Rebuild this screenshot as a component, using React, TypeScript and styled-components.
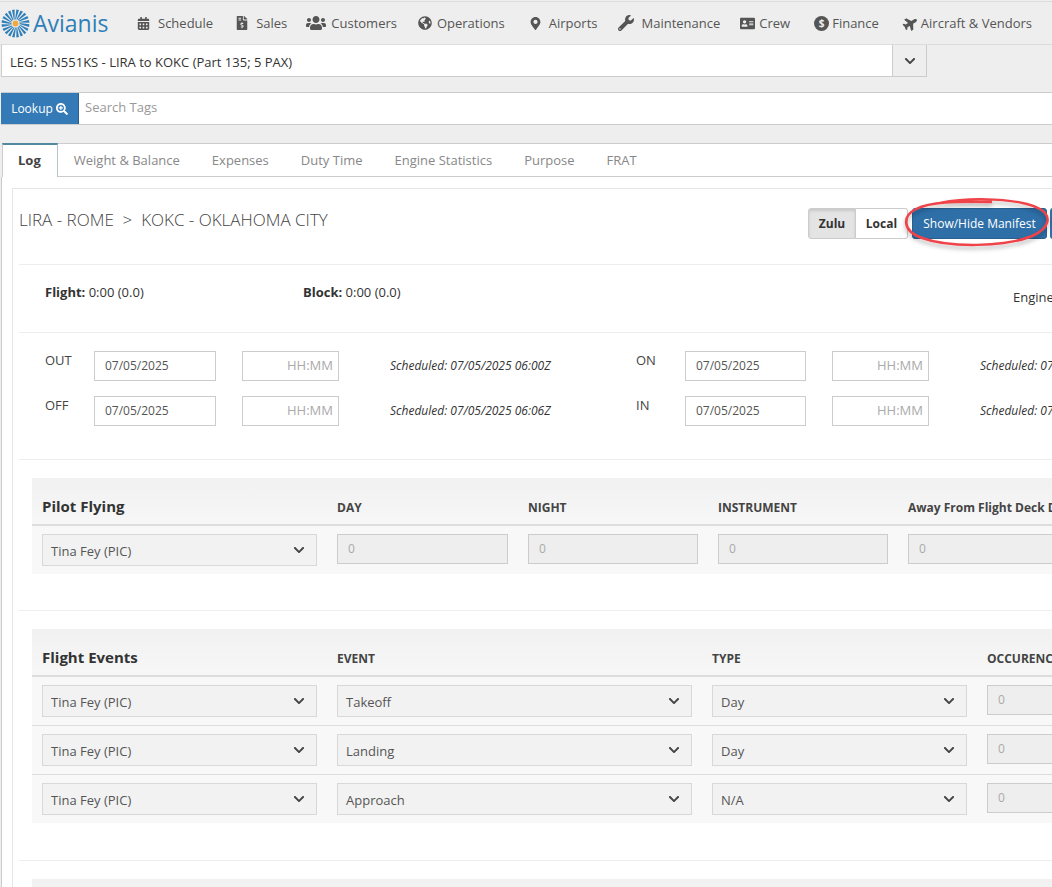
import React from "react";
import styled, { createGlobalStyle } from "styled-components";
import {
  FaAddressCard,
  FaCalendarAlt,
  FaChevronDown,
  FaFileInvoiceDollar,
  FaGlobeAmericas,
  FaMapMarkerAlt,
  FaPlane,
  FaSearchPlus,
  FaUsers,
  FaWrench,
} from "react-icons/fa";

const Global = createGlobalStyle`
  * { box-sizing: border-box; }
  html, body { margin: 0; padding: 0; height: 887px; overflow: hidden; background: #eeeeee; }
  body { font-family: "Open Sans", "Liberation Sans", sans-serif; font-size: 13px; color: #333; }
`;

const Page = styled.div`
  position: relative;
  width: 1052px;
  height: 887px;
  overflow: hidden;
  padding-top: 1px;
`;

const NavBar = styled.nav`
  display: flex;
  align-items: center;
  height: 44px;
  border-top: 1px solid #dcdcdc;
  border-bottom: 1px solid #dcdcdc;
  padding-left: 1px;
  white-space: nowrap;
`;

const Brand = styled.div`
  display: flex;
  flex: none;
  align-items: center;
  gap: 3px;
  width: 136px;
  color: #2f7fb8;
  font-size: 23px;
  line-height: 1;
`;

const NavItem = styled.a<{ $gap: number; $after: number }>`
  display: flex;
  flex: none;
  align-items: center;
  gap: ${(p) => p.$gap}px;
  margin-right: ${(p) => p.$after}px;
  color: #555;
  font-size: 13px;
  svg { color: #555; flex: none; }
`;

const TiltedPlane = styled(FaPlane)`
  transform: rotate(-32deg);
`;

const DollarBadge = styled.span`
  display: flex;
  align-items: center;
  justify-content: center;
  width: 15px;
  height: 15px;
  border-radius: 50%;
  background: #555;
  color: #eee;
  font-size: 10px;
  font-weight: 700;
`;

const LegRow = styled.div`
  display: flex;
  width: 926px;
  height: 32px;
  margin: 0 0 0 1px;
`;

const LegSelect = styled.div`
  flex: 1;
  display: flex;
  align-items: center;
  padding: 2px 0 0 8px;
  background: #fff;
  border: 1px solid #ccc;
  border-top: none;
  color: #333;
  font-size: 13px;
`;

const LegToggle = styled.div`
  display: flex;
  align-items: center;
  justify-content: center;
  width: 34px;
  color: #444;
  border: 1px solid #ccc;
  border-left: none;
  border-top: none;
`;

const LookupRow = styled.div`
  display: flex;
  height: 33px;
  margin: 15px 0 0 1px;
  border-top: 1px solid #ccc;
  border-bottom: 1px solid #ccc;
  background: #fff;
`;

const LookupButton = styled.button`
  display: flex;
  align-items: center;
  justify-content: center;
  gap: 3px;
  width: 78px;
  padding: 0;
  border: none;
  border-right: 1px solid #28608f;
  background: #337ab7;
  color: #fff;
  font: 400 12px "Open Sans", sans-serif;
`;

const SearchText = styled.div`
  display: flex;
  align-items: center;
  padding: 0 0 3px 6px;
  color: #999;
  font-size: 13px;
`;

const Tabs = styled.div`
  display: flex;
  height: 34px;
  margin: 18px 0 0 2px;
  background: #fff;
  border-top: 1px solid #ccc;
  border-bottom: 1px solid #ccc;
`;

const Tab = styled.div<{ $active?: boolean }>`
  display: flex;
  align-items: center;
  padding: 0 16px;
  color: ${(p) => (p.$active ? "#444" : "#888")};
  font-size: 13px;
  font-weight: ${(p) => (p.$active ? 700 : 400)};
  ${(p) =>
    p.$active &&
    `
    margin-top: -1px;
    height: 34px;
    padding: 0 16px 2px 15px;
    border-top: 2px solid #4f8aa0;
    border-left: 1px solid #ccc;
    border-right: 1px solid #b9c4c9;
    background: #fff;
  `}
`;

const TabBody = styled.div`
  height: 720px;
  margin-left: 1px;
  padding: 11px 0 0 10px;
  background: #fff;
  border-left: 1px solid #ccc;
`;

const Panel = styled.div`
  width: 1100px;
  height: 720px;
  padding: 0 6px;
  border: 1px solid #e6e6e6;
  border-right: none;
`;

const Header = styled.div`
  display: flex;
  justify-content: space-between;
  height: 76px;
  width: 1051px;
  padding-top: 19px;
  border-bottom: 1px solid #eee;
`;

const Route = styled.h1`
  margin: 1px 0 0;
  color: #444;
  font-size: 17px;
  font-weight: 300;
  line-height: 22px;
  white-space: pre;
`;

const HeaderActions = styled.div`
  display: flex;
  flex: none;
  height: 31px;
`;

const Toggle = styled.button<{ $on?: boolean; $side: "left" | "right" }>`
  flex: none;
  width: ${(p) => (p.$on ? "48px" : "52px")};
  padding: 0;
  background: ${(p) => (p.$on ? "#e4e4e4" : "#fff")};
  border: 1px solid #ccc;
  border-radius: ${(p) => (p.$side === "left" ? "3px 0 0 3px" : "0 3px 3px 0")};
  ${(p) => p.$side === "right" && "border-left: none;"}
  ${(p) => p.$on && "box-shadow: inset 0 2px 3px rgba(0,0,0,.12);"}
  color: #333;
  font: 700 12px "Open Sans", sans-serif;
`;

const ActionButton = styled.button`
  flex: none;
  width: 135px;
  margin-left: 4px;
  padding: 0;
  background: #2e6fa8;
  border: 1px solid #28608f;
  border-radius: 3px;
  color: #fff;
  font: 400 12px "Open Sans", sans-serif;
`;

const ExtraButton = styled.div`
  flex: none;
  width: 20px;
  margin-left: 3px;
  background: #2e6fa8;
  border-radius: 3px 0 0 3px;
`;

const Totals = styled.div`
  display: flex;
  height: 68px;
  width: 1051px;
  padding: 18px 0 0 26px;
  border-bottom: 1px solid #eee;
  font-size: 13px;
  line-height: 18px;
  color: #333;
  b { font-weight: 700; }
`;

const TotalCell = styled.div<{ $width: number }>`
  width: ${(p) => p.$width}px;
  flex: none;
  white-space: nowrap;
`;

const EngineCell = styled.div`
  padding-top: 5px;
  font-size: 13px;
`;

const Times = styled.div`
  display: flex;
  flex-direction: column;
  gap: 15px;
  height: 127px;
  width: 1051px;
  padding: 18px 0 0 26px;
  border-bottom: 1px solid #eee;
`;

const TimeRow = styled.div`
  display: flex;
  align-items: flex-start;
  height: 30px;
`;

const TimeLabel = styled.div`
  width: 49px;
  flex: none;
  color: #444;
  font-size: 13px;
  line-height: 18px;
`;

const TextBox = styled.div<{ $width: number; $right?: boolean }>`
  display: flex;
  align-items: center;
  justify-content: ${(p) => (p.$right ? "flex-end" : "flex-start")};
  flex: none;
  width: ${(p) => p.$width}px;
  height: 30px;
  margin-left: ${(p) => (p.$right ? "26px" : "0")};
  padding: 0 ${(p) => (p.$right ? "5px 2px" : "10px 1px")};
  border: 1px solid #ccc;
  color: ${(p) => (p.$right ? "#aaa" : "#555")};
  font-size: ${(p) => (p.$right ? "13px" : "12px")};
`;

const Scheduled = styled.div<{ $width: number }>`
  flex: none;
  width: ${(p) => p.$width}px;
  margin-left: 51px;
  padding-top: 7px;
  color: #333;
  font-size: 12px;
  font-style: italic;
  line-height: 16px;
  white-space: nowrap;
`;

const Section = styled.section`
  width: 1060px;
  margin: 18px 0 0 13px;
  background: #f8f8f8;
`;

const SectionHead = styled.div`
  display: grid;
  grid-template-columns: var(--cols);
  column-gap: 20px;
  align-items: end;
  height: 48px;
  padding: 0 0 7px 10px;
  background: linear-gradient(#f1f1f1, #f7f7f7);
  border-bottom: 2px solid #ddd;
`;

const SectionTitle = styled.div`
  color: #333;
  font-size: 15px;
  font-weight: 700;
  line-height: 22px;
`;

const ColumnTitle = styled.div`
  color: #444;
  font-size: 12px;
  font-weight: 700;
  line-height: 18px;
  white-space: nowrap;
`;

const SectionRow = styled.div`
  display: grid;
  grid-template-columns: var(--cols);
  column-gap: 20px;
  height: 49px;
  padding: 8px 0 0 10px;
  border-bottom: 1px solid #ddd;
  &:last-child { border-bottom: none; height: 48px; }
`;

const Select = styled.div`
  display: flex;
  align-items: center;
  justify-content: space-between;
  height: 32px;
  padding: 2px 11px 0 8px;
  background: #f2f2f2;
  border: 1px solid #d8d8d8;
  color: #555;
  font-size: 13px;
  svg { color: #444; margin-top: -2px; }
`;

const ReadOnly = styled.div`
  display: flex;
  align-items: center;
  height: 30px;
  padding: 0 0 2px 10px;
  background: #eee;
  border: 1px solid #ccc;
  color: #aaa;
  font-size: 12px;
`;

const Rule = styled.div<{ $gap: number }>`
  width: 1051px;
  height: 1px;
  margin-top: ${(p) => p.$gap}px;
  background: #eee;
`;

const Marker = styled.svg`
  position: absolute;
  left: 900px;
  top: 192px;
  pointer-events: none;
`;

const navLinks = [
  { label: "Schedule", gap: 8, after: 22, icon: <FaCalendarAlt size={13} /> },
  { label: "Sales", gap: 7, after: 19, icon: <FaFileInvoiceDollar size={14} /> },
  { label: "Customers", gap: 5, after: 21, icon: <FaUsers size={20} /> },
  { label: "Operations", gap: 5, after: 24, icon: <FaGlobeAmericas size={14} /> },
  { label: "Airports", gap: 7, after: 21, icon: <FaMapMarkerAlt size={13} /> },
  { label: "Maintenance", gap: 7, after: 20, icon: <FaWrench size={16} /> },
  { label: "Crew", gap: 4, after: 24, icon: <FaAddressCard size={15} /> },
  { label: "Finance", gap: 3, after: 24, icon: <DollarBadge>$</DollarBadge> },
  { label: "Aircraft & Vendors", gap: 3, after: 0, icon: <TiltedPlane size={15} /> },
];

const tabs = ["Weight & Balance", "Expenses", "Duty Time", "Engine Statistics", "Purpose", "FRAT"];

// swirled sunburst: each ray is a sliver that leans a little as it goes out
const Logo = () => (
  <svg width="29" height="29" viewBox="-15 -15 30 30">
    {Array.from({ length: 20 }).map((_, i) => (
      <polygon
        key={i}
        points="-0.4,-4.2 0.4,-4.2 3.6,-14 0.9,-14.4"
        fill="#2f7fb8"
        transform={`rotate(${i * 18})`}
      />
    ))}
    <circle r="3" fill="#f2a93b" />
  </svg>
);

const Chevron = () => <FaChevronDown size={12} />;

const Dropdown = ({ value }: { value: string }) => (
  <Select>
    {value}
    <Chevron />
  </Select>
);

const eventRows = [
  ["Takeoff", "Day"],
  ["Landing", "Day"],
  ["Approach", "N/A"],
];

export default function App() {
  return (
    <Page>
      <Global />
      <NavBar>
        <Brand>
          <Logo />
          Avianis
        </Brand>
        {navLinks.map((l) => (
          <NavItem key={l.label} $gap={l.gap} $after={l.after}>
            {l.icon}
            {l.label}
          </NavItem>
        ))}
      </NavBar>
      <LegRow>
        <LegSelect>LEG: 5 N551KS - LIRA to KOKC (Part 135; 5 PAX)</LegSelect>
        <LegToggle>
          <Chevron />
        </LegToggle>
      </LegRow>
      <LookupRow>
        <LookupButton>
          Lookup <FaSearchPlus size={12} />
        </LookupButton>
        <SearchText>Search Tags</SearchText>
      </LookupRow>
      <Tabs>
        <Tab $active>Log</Tab>
        {tabs.map((t) => (
          <Tab key={t}>{t}</Tab>
        ))}
      </Tabs>
      <TabBody>
        <Panel>
          <Header>
            <Route>{"LIRA - ROME  >  KOKC - OKLAHOMA CITY"}</Route>
            <HeaderActions>
              <Toggle $on $side="left">Zulu</Toggle>
              <Toggle $side="right">Local</Toggle>
              <ActionButton>Show/Hide Manifest</ActionButton>
              <ExtraButton />
            </HeaderActions>
          </Header>
          <Totals>
            <TotalCell $width={258}>
              <b>Flight:</b> 0:00 (0.0)
            </TotalCell>
            <TotalCell $width={710}>
              <b>Block:</b> 0:00 (0.0)
            </TotalCell>
            <EngineCell>Engine</EngineCell>
          </Totals>
          <Times>
            <TimeRow>
              <TimeLabel>OUT</TimeLabel>
              <TextBox $width={122}>07/05/2025</TextBox>
              <TextBox $width={97} $right>HH:MM</TextBox>
              <Scheduled $width={246}>Scheduled: 07/05/2025 06:00Z</Scheduled>
              <TimeLabel>ON</TimeLabel>
              <TextBox $width={121}>07/05/2025</TextBox>
              <TextBox $width={97} $right>HH:MM</TextBox>
              <Scheduled $width={200}>Scheduled: 07/05/2025 06:00Z</Scheduled>
            </TimeRow>
            <TimeRow>
              <TimeLabel>OFF</TimeLabel>
              <TextBox $width={122}>07/05/2025</TextBox>
              <TextBox $width={97} $right>HH:MM</TextBox>
              <Scheduled $width={246}>Scheduled: 07/05/2025 06:06Z</Scheduled>
              <TimeLabel>IN</TimeLabel>
              <TextBox $width={121}>07/05/2025</TextBox>
              <TextBox $width={97} $right>HH:MM</TextBox>
              <Scheduled $width={200}>Scheduled: 07/05/2025 06:06Z</Scheduled>
            </TimeRow>
          </Times>
          <Section style={{ "--cols": "275px 171px 170px 170px 160px" } as React.CSSProperties}>
            <SectionHead>
              <SectionTitle>Pilot Flying</SectionTitle>
              <ColumnTitle>DAY</ColumnTitle>
              <ColumnTitle>NIGHT</ColumnTitle>
              <ColumnTitle>INSTRUMENT</ColumnTitle>
              <ColumnTitle>Away From Flight Deck Duration</ColumnTitle>
            </SectionHead>
            <SectionRow>
              <Dropdown value="Tina Fey (PIC)" />
              <ReadOnly>0</ReadOnly>
              <ReadOnly>0</ReadOnly>
              <ReadOnly>0</ReadOnly>
              <ReadOnly>0</ReadOnly>
            </SectionRow>
          </Section>
          <Rule $gap={36} />
          <Section style={{ "--cols": "275px 355px 255px 120px" } as React.CSSProperties}>
            <SectionHead>
              <SectionTitle>Flight Events</SectionTitle>
              <ColumnTitle>EVENT</ColumnTitle>
              <ColumnTitle>TYPE</ColumnTitle>
              <ColumnTitle>OCCURENCES</ColumnTitle>
            </SectionHead>
            {eventRows.map(([event, type]) => (
              <SectionRow key={event}>
                <Dropdown value="Tina Fey (PIC)" />
                <Dropdown value={event} />
                <Dropdown value={type} />
                <ReadOnly>0</ReadOnly>
              </SectionRow>
            ))}
          </Section>
          <Rule $gap={37} />
          <Section>
            <SectionHead />
          </Section>
        </Panel>
      </TabBody>
      <Marker width="152" height="62" viewBox="0 0 152 62">
        <defs>
          <filter id="mark-shadow" x="-10%" y="-20%" width="120%" height="150%">
            <feDropShadow dx="0" dy="3" stdDeviation="2" floodColor="#000" floodOpacity="0.3" />
          </filter>
        </defs>
        <path
          d="M40 11 C70 5 120 6 140 17 C152 24 150 36 132 44 C105 55 50 56 22 46 C2 39 2 24 16 17 C30 10 55 9 92 10"
          fill="none"
          stroke="#ef4348"
          strokeWidth="2.5"
          filter="url(#mark-shadow)"
        />
      </Marker>
    </Page>
  );
}
